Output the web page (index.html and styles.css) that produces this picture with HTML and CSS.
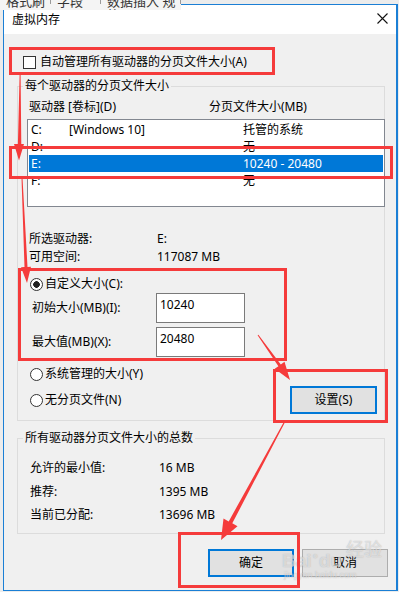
FILE: index.html
```html
<!DOCTYPE html>
<html lang="zh-CN">
<head>
<meta charset="utf-8">
<title>虚拟内存</title>
<link rel="stylesheet" href="styles.css">
</head>
<body>
<div class="behind">
  <span class="tab t1">格式刷用</span>
  <span class="tab t2">字段</span>
  <span class="tab t3">数据插入 规格</span>
</div>

<div class="dialog">
  <div class="titlebar">
    <span class="title">虚拟内存</span>
    <svg class="close" width="11" height="11" viewBox="0 0 11 11"><path d="M0.5 0.5 L10.5 10.5 M10.5 0.5 L0.5 10.5" stroke="#111" stroke-width="1.1" fill="none"/></svg>
  </div>
  <div class="content">
    <div class="auto"><span class="checkbox"></span><span>自动管理所有驱动器的分页文件大小(A)</span></div>

    <fieldset class="group g1">
      <legend>每个驱动器的分页文件大小</legend>
      <div class="g1-body">
        <div class="list-head"><span class="h-drive">驱动器 [卷标](D)</span><span>分页文件大小(MB)</span></div>
        <div class="listbox">
          <div class="row"><span class="d">C:</span><span class="l">[Windows 10]</span><span>托管的系统</span></div>
          <div class="row"><span class="d">D:</span><span class="l"></span><span>无</span></div>
          <div class="row sel"><span class="d">E:</span><span class="l"></span><span>10240 - 20480</span></div>
          <div class="row"><span class="d">F:</span><span class="l"></span><span>无</span></div>
        </div>
        <div class="info">
          <div class="kv"><span class="k">所选驱动器:</span><span>E:</span></div>
          <div class="kv"><span class="k">可用空间:</span><span>117087 MB</span></div>
        </div>
        <div class="radio-row custom"><span class="radio on"></span><span>自定义大小(C):</span></div>
        <div class="field-row"><span class="flabel">初始大小(MB)(I):</span><span class="edit">10240</span></div>
        <div class="field-row second"><span class="flabel">最大值(MB)(X):</span><span class="edit">20480</span></div>
        <div class="bottom-row">
          <div class="radio-col">
            <div class="radio-row"><span class="radio"></span><span>系统管理的大小(Y)</span></div>
            <div class="radio-row next"><span class="radio"></span><span>无分页文件(N)</span></div>
          </div>
          <div class="btn default set">设置(S)</div>
        </div>
      </div>
    </fieldset>

    <fieldset class="group g2">
      <legend>所有驱动器分页文件大小的总数</legend>
      <div class="g2-body">
        <div class="kv2"><span class="k2">允许的最小值:</span><span>16 MB</span></div>
        <div class="kv2"><span class="k2">推荐:</span><span>1395 MB</span></div>
        <div class="kv2"><span class="k2">当前已分配:</span><span>13696 MB</span></div>
      </div>
    </fieldset>

    <div class="buttons">
      <div class="btn default">确定</div>
      <div class="btn">取消</div>
    </div>
  </div>
</div>

<div class="watermark">
  <span class="wm-logo">Bai<span class="paw">●</span>du</span><span class="wm-cn">经验</span>
  <span class="wm-url">jingyan.baidu.com</span>
</div>

<div class="annot">
  <div class="rbox b1"></div>
  <div class="rbox b2"></div>
  <div class="rbox b3"></div>
  <div class="rbox b4"></div>
  <div class="rbox b5"></div>
  <svg class="arrows" width="399" height="592" viewBox="0 0 399 592">
    <polygon points="19.6,75 20.6,75 21.3,144 24,144 19,160.5 14,144 17.9,144"/>
    <polygon points="21.5,178 22.5,178 27.5,266.9 31,266.7 27,283 21,267.3 24.5,267.1"/>
    <polygon points="257.6,335.3 278.4,366.2 274.7,368.8 290,380 284.5,361.8 280.8,364.4 258.4,334.7"/>
    <polygon points="284.5,420.7 228.7,521.4 223.5,518.6 221,540 237.5,526.2 232.3,523.3 285.5,421.3"/>
  </svg>
</div>
</body>
</html>
```

FILE: styles.css
```css
* { box-sizing: border-box; }
html, body { margin: 0; padding: 0; }
body {
  width: 399px;
  height: 592px;
  overflow: hidden;
  position: relative;
  background: #ececec;
  font-family: "Noto Sans", "Noto Sans CJK SC", sans-serif;
  font-size: 12px;
  color: #000;
}

/* window behind the dialog (only a sliver visible) */
.behind {
  position: absolute;
  left: 0;
  top: 0;
  width: 181px;
  height: 10px;
  background: #f4f4f4;
  overflow: hidden;
  z-index: 2;
  display: flex;
}
.behind .tab {
  display: block;
  height: 10px;
  line-height: 14px;
  margin-top: -6px;
  font-size: 13px;
  color: #333;
  padding-left: 6px;
  border-right: 1px solid #9a9a9a;
}
.behind .t1 { width: 51px; }
.behind .t2 { width: 50px; }
.behind .t3 { width: 80px; }

.dialog {
  margin: 4px 0 0 3px;
  width: 395px;
  height: 587px;
  border: 1px solid #1b7fd5;
  border-right-width: 2px;
  background: #f0f0f0;
  display: flex;
  flex-direction: column;
}

.titlebar {
  height: 29px;
  flex: none;
  background: #fff;
  display: flex;
  justify-content: space-between;
  align-items: center;
  padding: 0 8px 0 8px;
}
.title { font-size: 12px; line-height: 16px; }
.close { align-self: flex-start; margin-top: 8px; }

.content { flex: 1; }

.auto {
  display: flex;
  align-items: center;
  height: 16px;
  line-height: 16px;
  margin: 20px 0 0 19px;
}
.checkbox {
  width: 13px;
  height: 13px;
  border: 1px solid #333;
  background: #fff;
  margin-right: 4px;
  flex: none;
}

.group {
  margin: 0;
  padding: 0;
  border: 1px solid #dcdcdc;
  width: 368px;
  min-width: 0;
}
.group legend {
  padding: 0 2px;
  margin-left: 5px;
  line-height: 16px;
}
.g1 { margin: 8px 0 0 13px; }
.g1-body { padding: 0 0 6px 9px; }

.list-head {
  display: flex;
  margin-top: 5px;
  line-height: 16px;
}
.h-drive { width: 182px; padding-left: 2px; }

.listbox {
  margin-top: 4px;
  width: 358px;
  height: 88px;
  border: 1px solid #828790;
  background: #fff;
  padding: 1px;
  position: relative;
}
.row {
  display: flex;
  height: 17px;
  line-height: 17px;
  padding-left: 2px;
}
.row .d { width: 38px; }
.row .l { width: 174px; }
.row.sel { background: #0078d7; color: #fff; }

.info { margin-top: 23px; }
.kv { display: flex; line-height: 18px; }
.kv .k { width: 130px; padding-left: 2px; }

.radio-row {
  display: flex;
  align-items: center;
  height: 18px;
  line-height: 18px;
  padding-left: 3px;
}
.radio-row.custom { margin-top: 9px; }
.radio-row.next { margin-top: 8px; }
.radio {
  width: 13px;
  height: 13px;
  border-radius: 50%;
  border: 1px solid #333;
  background: #fff;
  margin-right: 2px;
  flex: none;
}
.radio.on { background: radial-gradient(circle, #222 0 3px, #fff 3.6px); }

.field-row {
  display: flex;
  align-items: center;
  height: 30px;
}
.field-row.second { margin-top: 4px; }
.flabel { width: 129px; padding-left: 5px; line-height: 18px; }
.edit {
  width: 89px;
  height: 30px;
  border: 1px solid #7a7a7a;
  background: #fff;
  padding: 3px 3px 0 3px;
  line-height: 16px;
  font-size: 12px;
}

.bottom-row {
  display: flex;
  align-items: flex-end;
  margin-top: 8px;
}
.radio-col { padding-bottom: 5px; flex: 1; }

.btn {
  width: 86px;
  height: 28px;
  border: 1px solid #adadad;
  background: #e1e1e1;
  display: flex;
  align-items: center;
  justify-content: center;
  line-height: 16px;
  flex: none;
}
.btn.default { border: 2px solid #0078d7; }
.btn.set { width: 87px; margin-right: 7px; }

.g2 { margin: 9px 0 0 13px; }
.g2-body { padding: 10px 0 6px 12px; }
.kv2 { display: flex; line-height: 23.5px; height: 23.5px; }
.k2 { width: 129px; }

.buttons {
  display: flex;
  justify-content: flex-end;
  gap: 8px;
  margin-top: 15px;
  padding-right: 8px;
}

/* watermark */
.watermark {
  position: absolute;
  left: 282px;
  top: 537px;
  width: 100px;
  height: 44px;
  z-index: 3;
  color: rgba(255, 255, 255, 0.55);
  text-shadow: 0 0 1px rgba(120, 120, 120, 0.55);
  pointer-events: none;
}
.wm-logo {
  position: absolute;
  left: 0;
  top: 8px;
  font: bold 19px/22px "Liberation Sans", sans-serif;
  letter-spacing: 0;
}
.paw { font-size: 9px; vertical-align: 8px; margin: 0 1px; }
.wm-cn {
  position: absolute;
  left: 64px;
  top: 0;
  font: 18px/22px "Noto Sans CJK SC", sans-serif;
}
.wm-url {
  position: absolute;
  left: 2px;
  top: 33px;
  font: 9px/10px "Liberation Sans", sans-serif;
}

/* annotations */
.annot {
  position: absolute;
  left: 0;
  top: 0;
  width: 399px;
  height: 592px;
  z-index: 5;
  pointer-events: none;
}
.rbox {
  position: absolute;
  border: 3px solid #f53b3b;
}
.b1 { left: 9px; top: 47px; width: 266px; height: 28px; }
.b2 { left: 9px; top: 146px; width: 384px; height: 33px; }
.b3 { left: 18px; top: 268px; width: 269px; height: 93px; }
.b4 { left: 273px; top: 369px; width: 115px; height: 54px; }
.b5 { left: 178px; top: 532px; width: 122px; height: 56px; }
.arrows { position: absolute; left: 0; top: 0; }
.arrows polygon { fill: #f53b3b; }
```
